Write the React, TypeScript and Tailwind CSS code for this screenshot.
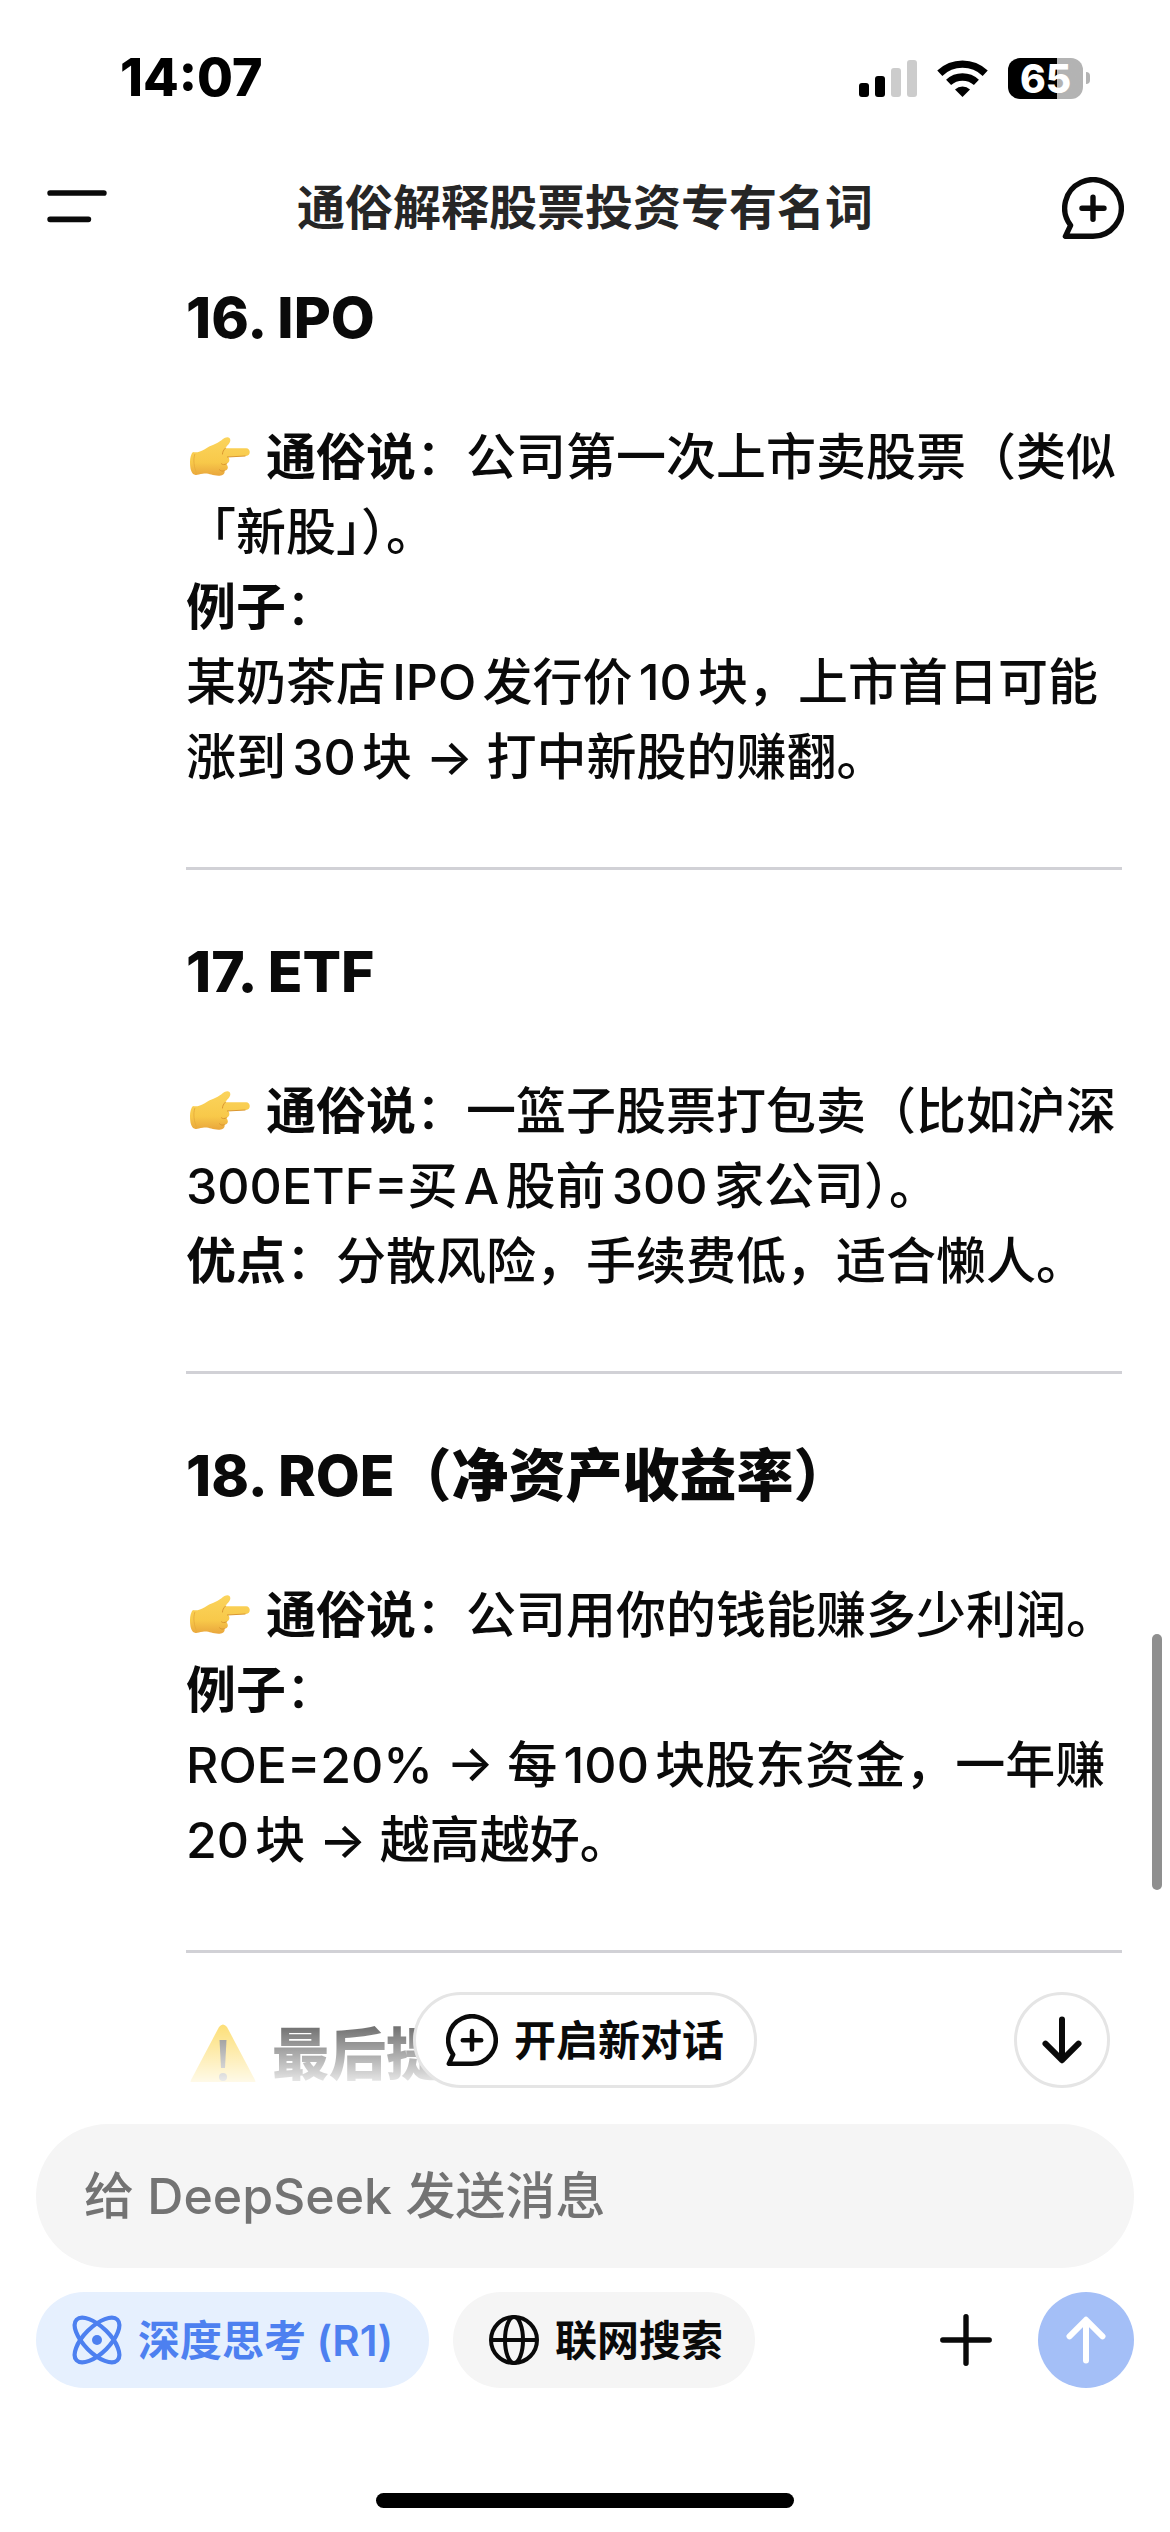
import React from 'react';

type Line = { label?: string; text: string; pointer?: boolean };

interface Section {
  title: string;
  lines: Line[];
}

const sections: Section[] = [
  {
    title: '16. IPO',
    lines: [
      { pointer: true, label: '通俗说', text: '：公司第一次上市卖股票（类似「新股」）。' },
      { label: '例子', text: '：' },
      { text: '某奶茶店IPO发行价10块，上市首日可能涨到30块 → 打中新股的赚翻。' },
    ],
  },
  {
    title: '17. ETF',
    lines: [
      { pointer: true, label: '通俗说', text: '：一篮子股票打包卖（比如沪深300ETF=买A股前300家公司）。' },
      { label: '优点', text: '：分散风险，手续费低，适合懒人。' },
    ],
  },
  {
    title: '18. ROE（净资产收益率）',
    lines: [
      { pointer: true, label: '通俗说', text: '：公司用你的钱能赚多少利润。' },
      { label: '例子', text: '：' },
      { text: 'ROE=20% → 每100块股东资金，一年赚20块 → 越高越好。' },
    ],
  },
];

const ChatPlusIcon = ({ className }: { className: string }) => (
  <svg viewBox="0 0 62 62" fill="none" stroke="currentColor" strokeWidth="5.4" strokeLinecap="round" strokeLinejoin="round" className={className} aria-hidden="true">
    <path d="M31 59.3A28.3 28.3 0 1 0 8.6 48.3L3.4 59.3Z" />
    <path d="M31 20.3v22M20 31.3h22" />
  </svg>
);

const PointingHand = () => (
  <svg viewBox="0 0 61 40" className="mr-4 ml-1 inline-block h-10 w-15 align-[-2px]" role="img" aria-label="👉">
    <defs>
      <linearGradient id="hand" x1="0" y1="0" x2="0" y2="1">
        <stop offset="0" stopColor="#fbd45c" />
        <stop offset="0.65" stopColor="#f8c94a" />
        <stop offset="1" stopColor="#e9a63c" />
      </linearGradient>
    </defs>
    <path
      d="M3 15C7 16 11 14 15 12C21 8 27 7 32 3C36 -1 41 -1 41 3C41 6 38 8 36 11L57 11C62 11 62 19 57 19L39 20C41 23 40 26 37 27C40 31 38 34 35 34C36 37 33 39 29 39C22 39 19 36 13 37C9 37 7 39 5 38C1 37 0 31 0 25C0 21 1 17 3 15Z"
      fill="url(#hand)"
    />
    <path d="M36 11C34 13 33 15 33 17M56 19L38 20M37 27C35 28 33 28 32 27M35 34C33 35 31 34 30 33" fill="none" stroke="#d9952f" strokeWidth="1" strokeLinecap="round" />
    <path d="M5 17C3 22 4 31 7 37" fill="none" stroke="#e8ad3c" strokeWidth="1" />
  </svg>
);

const WarningIcon = () => (
  <svg viewBox="0 0 66 62" className="h-[62px] w-[66px]" role="img" aria-label="⚠️">
    <path d="M29 3Q33 -2 37 3L65 56Q67 62 60 62H6Q-1 62 1 56Z" fill="#fbc91b" />
    <path d="M29.5 16H36.5L35 44H31Z" fill="#3b3b3b" />
    <circle cx="33" cy="53" r="4" fill="#3b3b3b" />
  </svg>
);

function StatusBar() {
  return (
    <div className="flex h-38 items-center justify-between pt-1 pr-20 pl-30">
      <span className="text-[52px] leading-none font-extrabold text-black">14:07</span>
      <div className="flex items-center gap-5">
        <svg viewBox="0 0 58 38" className="h-[38px] w-[58px]" aria-hidden="true">
          <rect x="0" y="24" width="10" height="14" rx="3" />
          <rect x="16" y="17" width="10" height="21" rx="3" />
          <rect x="32" y="9" width="10" height="29" rx="3" fill="#ccc" />
          <rect x="48" y="1" width="10" height="37" rx="3" fill="#ccc" />
        </svg>
        <svg viewBox="0 0 51 38" className="h-[38px] w-[51px]" aria-hidden="true">
          <g fill="none" stroke="#000" strokeWidth="7.4">
            <path d="M2.8 14.2A33 33 0 0 1 48.2 14.2" />
            <path d="M11.6 23.4A20.5 20.5 0 0 1 39.4 23.4" />
          </g>
          <path d="M25.5 38L18 30.4A11 11 0 0 1 33 30.4Z" />
        </svg>
        <div className="flex items-center gap-[3px]">
          <div className="flex h-[41px] w-[75px] items-center justify-center rounded-[12px] bg-linear-to-r from-black from-65% to-[#b3b3b3] to-65% text-[39px] leading-none font-extrabold text-white">
            65
          </div>
          <div className="h-3 w-1 rounded-r-full bg-[#b3b3b3]" />
        </div>
      </div>
    </div>
  );
}

function Header() {
  return (
    <header className="flex h-28 items-center justify-between pr-[46px] pl-[46px] text-[#0a0a0a]">
      <button type="button" aria-label="菜单">
        <svg viewBox="0 0 60 60" fill="none" stroke="currentColor" strokeWidth="5.5" strokeLinecap="round" className="size-[62px]">
          <path d="M4 15.5H56M4 41H41" />
        </svg>
      </button>
      <h1 className="text-[48px] leading-none font-bold text-[#262626]">通俗解释股票投资专有名词</h1>
      <button type="button" aria-label="新对话">
        <ChatPlusIcon className="size-[62px]" />
      </button>
    </header>
  );
}

function Term({ title, lines }: Section) {
  return (
    <section>
      <h2 className="text-[57px] leading-[76px] font-extrabold">{title}</h2>
      <div className="mt-16 mb-18 text-[50px] leading-[75px] font-medium">
        {lines.map((line) => (
          <p key={line.text + line.label}>
            {line.pointer && <PointingHand />}
            {line.label && <strong className="font-bold">{line.label}</strong>}
            {line.text}
          </p>
        ))}
      </div>
      <hr className="mb-16 border-t-3 border-[#d1d1d6]" />
    </section>
  );
}

function Composer() {
  return (
    <form className="px-9 pt-[42px]" onSubmit={(e) => e.preventDefault()}>
      <input
        type="text"
        aria-label="消息"
        placeholder="给 DeepSeek 发送消息"
        className="h-36 w-full rounded-full bg-[#f5f5f5] px-12 text-[50px] font-medium outline-none placeholder:text-[#737373]"
      />
      <div className="mt-6 flex items-center gap-6 text-[42px] font-semibold">
        <button type="button" className="flex h-24 items-center gap-4 rounded-full bg-[#e6f0fe] px-9 text-[#4d80f0]">
          <svg viewBox="0 0 50 50" fill="none" stroke="currentColor" strokeWidth="4.2" className="size-[50px]" aria-hidden="true">
            <ellipse cx="25" cy="25" rx="28.8" ry="13" transform="rotate(45 25 25)" />
            <ellipse cx="25" cy="25" rx="28.8" ry="13" transform="rotate(-45 25 25)" />
            <circle cx="25" cy="25" r="5" fill="currentColor" stroke="none" />
          </svg>
          深度思考 (R1)
        </button>
        <button type="button" className="flex h-24 items-center gap-4 rounded-full bg-[#f5f5f5] pr-8 pl-9 text-[#0a0a0a]">
          <svg viewBox="0 0 50 50" fill="none" stroke="currentColor" strokeWidth="4" className="size-[50px]" aria-hidden="true">
            <circle cx="25" cy="25" r="23" />
            <ellipse cx="25" cy="25" rx="9" ry="23" />
            <path d="M2 25H48" />
          </svg>
          联网搜索
        </button>
        <button type="button" aria-label="添加" className="mr-5 ml-auto text-[#0a0a0a]">
          <svg viewBox="0 0 56 56" fill="none" stroke="currentColor" strokeWidth="5.4" strokeLinecap="round" className="size-14">
            <path d="M28 4.8V51.2M4.8 28H51.2" />
          </svg>
        </button>
        <button type="submit" aria-label="发送" className="flex size-24 items-center justify-center rounded-full bg-[#a4bff7] text-white">
          <svg viewBox="0 0 48 48" fill="none" stroke="currentColor" strokeWidth="6" strokeLinecap="round" strokeLinejoin="round" className="size-12">
            <path d="M24 44.5V4M7.5 20.3L24 3.8L40.5 20.3" />
          </svg>
        </button>
      </div>
    </form>
  );
}

export default function App() {
  return (
    <div lang="zh-CN" className="flex h-screen flex-col bg-white font-['Inter','Noto_Sans_CJK_SC',sans-serif] text-[#0a0a0a]">
      <StatusBar />
      <Header />

      <div className="relative flex min-h-0 flex-1 flex-col">
        <main className="min-h-0 flex-1 overflow-hidden pt-4 pr-12 pl-[186px] [text-autospace:normal]">
          {sections.map((s) => (
            <Term key={s.title} {...s} />
          ))}
          <h2 className="flex items-center gap-4 pl-1 text-[57px] leading-[76px] font-extrabold whitespace-nowrap">
            <WarningIcon />
            最后提醒
          </h2>
        </main>

        {/* Fade above the composer */}
        <div className="pointer-events-none absolute inset-x-0 bottom-0 h-26 bg-linear-to-b from-white/0 to-white/90" />
        <div className="absolute right-2 bottom-48 h-64 w-2.5 rounded-full bg-[#8f8f8f]" />

        <button type="button" className="absolute -bottom-1.5 left-1/2 flex h-24 -translate-x-1/2 items-center gap-4 rounded-full border-3 border-[#e5e5e5] bg-white px-[30px] text-[42px] font-semibold whitespace-nowrap">
          <ChatPlusIcon className="size-[52px]" />
          开启新对话
        </button>
        <button type="button" aria-label="滚动到底部" className="absolute right-15 -bottom-1.5 flex size-24 items-center justify-center rounded-full border-3 border-[#e5e5e5] bg-white">
          <svg viewBox="0 0 48 48" fill="none" stroke="currentColor" strokeWidth="6" strokeLinecap="round" strokeLinejoin="round" className="size-12">
            <path d="M24 3.5V44M7.5 27.7L24 44.2L40.5 27.7" />
          </svg>
        </button>
      </div>

      <Composer />

      <div className="flex h-36 items-end justify-center pb-6">
        <div className="h-[15px] w-[418px] rounded-full bg-black" />
      </div>
    </div>
  );
}
